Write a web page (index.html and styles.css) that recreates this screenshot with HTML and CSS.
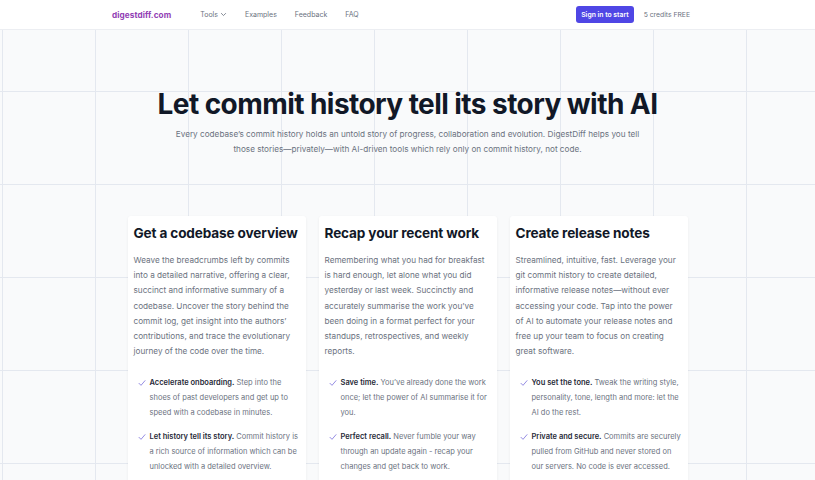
FILE: index.html
```html
<!DOCTYPE html>
<html lang="en">
<head>
<meta charset="utf-8">
<title>DigestDiff</title>
<link rel="stylesheet" href="styles.css">
</head>
<body>
<div class="grid-bg" aria-hidden="true"></div>
<header class="nav">
  <div class="nav-inner">
    <a class="logo" href="#">digestdiff.com</a>
    <nav class="links">
      <a href="#" class="link">Tools <svg class="chev" viewBox="0 0 10 10" width="7" height="7"><path d="M2 3.5 L5 6.5 L8 3.5" fill="none" stroke="currentColor" stroke-width="1.2" stroke-linecap="round" stroke-linejoin="round"/></svg></a>
      <a href="#" class="link">Examples</a>
      <a href="#" class="link">Feedback</a>
      <a href="#" class="link">FAQ</a>
    </nav>
    <div class="nav-right">
      <a href="#" class="btn">Sign in to start</a>
      <span class="credits">5 credits FREE</span>
    </div>
  </div>
</header>

<main>
  <section class="hero">
    <h1>Let commit history tell its story with AI</h1>
    <p>Every codebase’s commit history holds an untold story of progress, collaboration and evolution. DigestDiff helps you tell those stories—privately—with AI-driven tools which rely only on commit history, not code.</p>
  </section>

  <section class="cards">
    <article class="card">
      <h2>Get a codebase overview</h2>
      <p class="desc">Weave the breadcrumbs left by commits into a detailed narrative, offering a clear, succinct and informative summary of a codebase. Uncover the story behind the commit log, get insight into the authors’ contributions, and trace the evolutionary journey of the code over the time.</p>
      <ul class="features">
        <li><svg class="check" viewBox="0 0 12 12"><path d="M1.5 6.5 L4.5 9.5 L10.5 2.5" fill="none" stroke="currentColor" stroke-width="1.1" stroke-linecap="round" stroke-linejoin="round"/></svg><p class="ftext"><b>Accelerate onboarding.</b> Step into the shoes of past developers and get up to speed with a codebase in minutes.</p></li>
        <li><svg class="check" viewBox="0 0 12 12"><path d="M1.5 6.5 L4.5 9.5 L10.5 2.5" fill="none" stroke="currentColor" stroke-width="1.1" stroke-linecap="round" stroke-linejoin="round"/></svg><p class="ftext"><b>Let history tell its story.</b> Commit history is a rich source of information which can be unlocked with a detailed overview.</p></li>
      </ul>
    </article>
    <article class="card">
      <h2>Recap your recent work</h2>
      <p class="desc">Remembering what you had for breakfast is hard enough, let alone what you did yesterday or last week. Succinctly and accurately summarise the work you’ve been doing in a format perfect for your standups, retrospectives, and weekly reports.</p>
      <ul class="features">
        <li><svg class="check" viewBox="0 0 12 12"><path d="M1.5 6.5 L4.5 9.5 L10.5 2.5" fill="none" stroke="currentColor" stroke-width="1.1" stroke-linecap="round" stroke-linejoin="round"/></svg><p class="ftext"><b>Save time.</b> You’ve already done the work once; let the power of AI summarise it for you.</p></li>
        <li><svg class="check" viewBox="0 0 12 12"><path d="M1.5 6.5 L4.5 9.5 L10.5 2.5" fill="none" stroke="currentColor" stroke-width="1.1" stroke-linecap="round" stroke-linejoin="round"/></svg><p class="ftext"><b>Perfect recall.</b> Never fumble your way through an update again - recap your changes and get back to work.</p></li>
      </ul>
    </article>
    <article class="card">
      <h2>Create release notes</h2>
      <p class="desc">Streamlined, intuitive, fast. Leverage your git commit history to create detailed, informative release notes—without ever accessing your code. Tap into the power of AI to automate your release notes and free up your team to focus on creating great software.</p>
      <ul class="features">
        <li><svg class="check" viewBox="0 0 12 12"><path d="M1.5 6.5 L4.5 9.5 L10.5 2.5" fill="none" stroke="currentColor" stroke-width="1.1" stroke-linecap="round" stroke-linejoin="round"/></svg><p class="ftext"><b>You set the tone.</b> Tweak the writing style, personality, tone, length and more: let the AI do the rest.</p></li>
        <li><svg class="check" viewBox="0 0 12 12"><path d="M1.5 6.5 L4.5 9.5 L10.5 2.5" fill="none" stroke="currentColor" stroke-width="1.1" stroke-linecap="round" stroke-linejoin="round"/></svg><p class="ftext"><b>Private and secure.</b> Commits are securely pulled from GitHub and never stored on our servers. No code is ever accessed.</p></li>
      </ul>
    </article>
  </section>
</main>
</body>
</html>
```

FILE: styles.css
```css
* { box-sizing: border-box; }
html, body { margin: 0; padding: 0; }
body {
  font-family: Inter, "Noto Sans", "Liberation Sans", sans-serif;
  background: #f9fafb;
  color: #111827;
  position: relative;
  overflow: hidden;
  height: 480px;
}
a { text-decoration: none; color: inherit; }

.grid-bg {
  position: absolute;
  inset: 0;
  background-image:
    linear-gradient(to right, #e4e8ef 1px, transparent 1px),
    linear-gradient(to bottom, #e4e8ef 1px, transparent 1px);
  background-size: 93px 93px;
  background-position: 2px -2px;
  z-index: 0;
}

.nav {
  position: relative;
  z-index: 1;
  height: 30px;
  background: #ffffff;
  border-bottom: 1px solid #eceef2;
}
.nav-inner {
  width: 578px;
  margin: 0 0 0 112px;
  height: 100%;
  display: flex;
  align-items: center;
}
.logo {
  font-size: 8.2px;
  font-weight: 700;
  color: #9140b4;
  letter-spacing: 0.01em;
}
.links {
  display: flex;
  align-items: center;
  gap: 18px;
  margin-left: 29px;
}
.link {
  font-size: 7px;
  color: #6b7280;
  display: inline-flex;
  align-items: center;
  gap: 2px;
}
.chev { display: block; }
.nav-right {
  margin-left: auto;
  display: flex;
  align-items: center;
  gap: 10px;
}
.btn {
  background: #4f46e5;
  color: #ffffff;
  font-size: 6.8px;
  font-weight: 600;
  height: 17px;
  padding: 0 5px;
  border-radius: 3px;
  display: inline-flex;
  align-items: center;
}
.credits {
  font-size: 6.8px;
  color: #6b7280;
}

main { position: relative; z-index: 1; }

.hero {
  text-align: center;
  padding-top: 55px;
}
.hero h1 {
  margin: 0;
  font-size: 28px;
  line-height: 38px;
  font-weight: 700;
  letter-spacing: -0.02em;
  color: #111827;
}
.hero p {
  margin: 4px auto 0;
  width: 480px;
  font-size: 8.2px;
  line-height: 15px;
  color: #6b7280;
}

.cards {
  display: flex;
  justify-content: center;
  gap: 13px;
  margin-top: 59px;
}
.card {
  width: 178px;
  background: #ffffff;
  border-radius: 3px;
  box-shadow: 0 1px 3px rgba(17, 24, 39, 0.06);
  padding: 8px 5px 20px 6px;
}
.card h2 {
  margin: 0;
  font-size: 13.6px;
  line-height: 18px;
  font-weight: 700;
  letter-spacing: -0.01em;
  color: #111827;
}
.desc {
  margin: 11px 0 0;
  font-size: 8.2px;
  line-height: 15.2px;
  color: #6b7280;
}
.features {
  list-style: none;
  margin: 16px 0 0;
  padding: 0 0 0 4px;
}
.features li {
  display: flex;
  gap: 4px;
  margin-bottom: 9px;
}
.ftext {
  margin: 0;
  font-size: 7.5px;
  line-height: 15px;
  color: #6b7280;
}
.ftext b {
  color: #1f2937;
  font-weight: 600;
}
.check {
  flex: none;
  width: 8px;
  height: 8px;
  margin-top: 4px;
  color: #6d63d8;
}
```
